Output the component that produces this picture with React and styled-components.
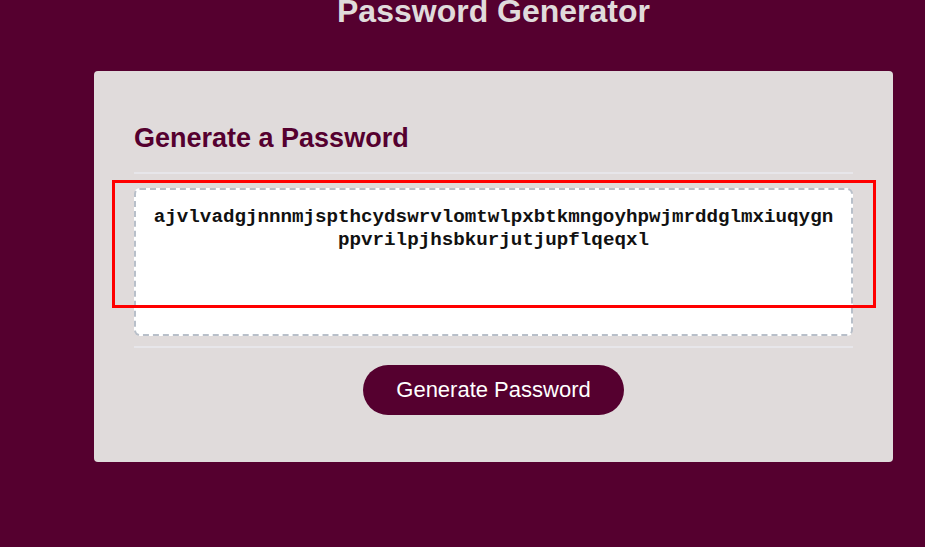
import React from 'react';
import styled, { createGlobalStyle } from 'styled-components';

const GlobalStyle = createGlobalStyle`
  html, body {
    margin: 0;
    padding: 0;
    background-color: #55002f;
    font-family: "Liberation Sans", Arial, sans-serif;
    overflow: hidden;
  }
`;

const Page = styled.div`
  position: relative;
  width: 925px;
  height: 547px;
  overflow: hidden;
`;

const Wrapper = styled.div`
  margin-left: 94px;
  width: 799px;
`;

const Title = styled.h1`
  margin: -7px 0 41px;
  text-align: center;
  font-size: 32px;
  font-weight: bold;
  color: #e0dbdb;
`;

const Card = styled.div`
  background-color: #e0dbdb;
  border-radius: 4px;
  padding: 0 40px;
`;

const CardHeader = styled.div`
  padding-top: 52px;
  padding-bottom: 18px;
  border-bottom: 2px solid #e7e6ea;
`;

const CardTitle = styled.h2`
  margin: 0;
  font-size: 27px;
  font-weight: bold;
  color: #55002f;
`;

const CardBody = styled.div`
  padding: 14px 0 10px;
  border-bottom: 2px solid #e7e6ea;
`;

const PasswordBox = styled.textarea`
  display: block;
  box-sizing: border-box;
  width: 100%;
  height: 148px;
  margin: 0;
  padding: 16px 14px 14px;
  border: 2px dashed #b8bfc9;
  border-radius: 6px;
  background: #ffffff;
  resize: none;
  overflow: hidden;
  outline: none;
  text-align: center;
  font-family: "Liberation Mono", "Courier New", monospace;
  font-size: 19.2px;
  font-weight: bold;
  line-height: 23px;
  color: #111;
`;

const CardFooter = styled.div`
  display: flex;
  justify-content: center;
  padding: 17px 0 47px;
`;

const Button = styled.button`
  width: 261px;
  height: 50px;
  border: none;
  border-radius: 25px;
  background-color: #55002f;
  color: #ffffff;
  font-family: "Liberation Sans", Arial, sans-serif;
  font-size: 22px;
  cursor: pointer;
`;

const Highlight = styled.div`
  position: absolute;
  left: 112px;
  top: 180px;
  width: 764px;
  height: 128px;
  box-sizing: border-box;
  border: 3px solid #ff0000;
  pointer-events: none;
`;

const password =
  'ajvlvadgjnnnmjspthcydswrvlomtwlpxbtkmngoyhpwjmrddglmxiuqygnppvrilpjhsbkurjutjupflqeqxl';

const App = () => {
  return (
    <>
      <GlobalStyle />
      <Page>
        <Wrapper>
          <Title>Password Generator</Title>
          <Card>
            <CardHeader>
              <CardTitle>Generate a Password</CardTitle>
            </CardHeader>
            <CardBody>
              <PasswordBox readOnly value={password} />
            </CardBody>
            <CardFooter>
              <Button>Generate Password</Button>
            </CardFooter>
          </Card>
        </Wrapper>
        <Highlight />
      </Page>
    </>
  );
};

export default App;
